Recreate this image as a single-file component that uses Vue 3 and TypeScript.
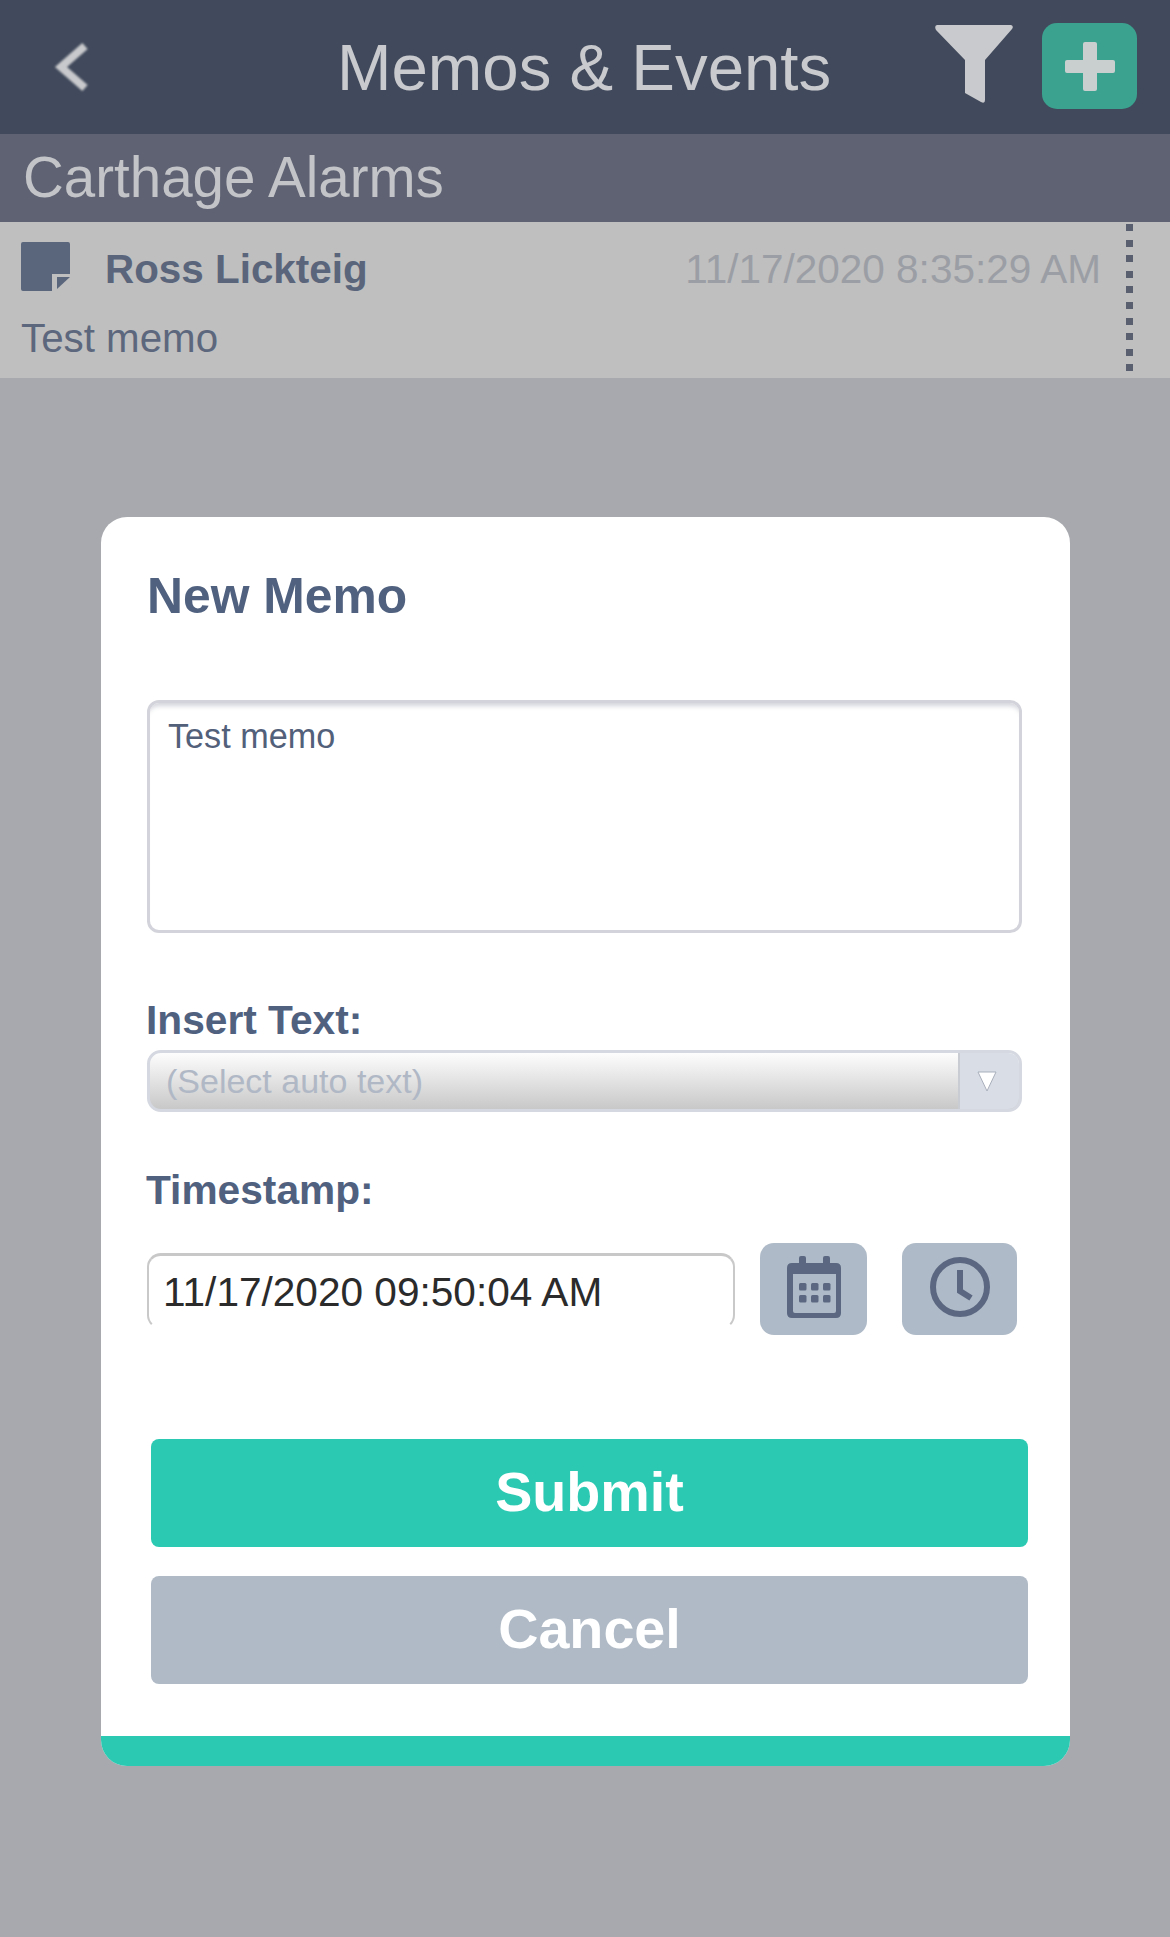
<script setup lang="ts">
import { ref } from 'vue';

const memoText = ref('Test memo');
const timestamp = ref('11/17/2020 09:50:04 AM');

const calendarDots = [12, 24, 36].flatMap((x) => [27, 39].map((y) => ({ x, y })));
</script>

<template>
  <div class="screen">
    <header class="topbar">
      <svg class="back" width="34" height="48" viewBox="0 0 34 48">
        <path d="M31 3 L7 24 L31 45" fill="none" stroke="#c8c9cc" stroke-width="8" />
      </svg>
      <h1 class="title">Memos &amp; Events</h1>
      <svg class="filter" width="78" height="78" viewBox="0 0 78 78">
        <path d="M2 0 H76 Q79 1 77 4 L50 35 V75 Q50 79 46 77 L30 68 V35 L1 5 Q-1 1 2 0 Z" fill="#c9cacd" />
      </svg>
      <button class="add" type="button">
        <svg width="50" height="49" viewBox="0 0 50 49">
          <path d="M18 2 Q18 0 20 0 H30 Q32 0 32 2 V18 H48 Q50 18 50 20 V29 Q50 31 48 31 H32 V47 Q32 49 30 49 H20 Q18 49 18 47 V31 H2 Q0 31 0 29 V20 Q0 18 2 18 H18 Z" fill="#c9cfce" />
        </svg>
      </button>
    </header>

    <div class="subbar">Carthage Alarms</div>

    <section class="memo-row">
      <div class="memo-body">
        <div class="memo-head">
          <svg class="note" width="49" height="49" viewBox="0 0 49 49">
            <path d="M2 0 H47 Q49 0 49 2 V32 H31 V49 H2 Q0 49 0 47 V2 Q0 0 2 0 Z" fill="#5a667c" />
            <path d="M36 35 H49 L36 47 Z" fill="#5a667c" />
          </svg>
          <span class="author">Ross Lickteig</span>
          <span class="stamp">11/17/2020 8:35:29 AM</span>
        </div>
        <p class="memo-text">Test memo</p>
      </div>
      <div class="dots"></div>
    </section>

    <form class="modal" @submit.prevent>
      <h2 class="modal-title">New Memo</h2>
      <textarea v-model="memoText" class="memo-input"></textarea>

      <label class="field-label insert-label">Insert Text:</label>
      <div class="select">
        <span class="select-text">(Select auto text)</span>
        <span class="select-arrow">
          <svg width="20" height="21" viewBox="0 0 20 21">
            <path d="M1 1 H19 L10 20 Z" fill="#fff" stroke="#a9afbb" stroke-width="1" />
          </svg>
        </span>
      </div>

      <label class="field-label stamp-label">Timestamp:</label>
      <div class="stamp-row">
        <input v-model="timestamp" class="stamp-input" type="text" />
        <button class="icon-btn cal-btn" type="button">
          <svg width="54" height="62" viewBox="0 0 54 62">
            <rect x="12" y="0" width="7" height="12" rx="2" fill="#5b6780" />
            <rect x="36" y="0" width="7" height="12" rx="2" fill="#5b6780" />
            <path fill-rule="evenodd" d="M5 7 H49 Q54 7 54 12 V57 Q54 62 49 62 H5 Q0 62 0 57 V12 Q0 7 5 7 Z M6 18 V55 Q6 57 8 57 H47 Q49 57 49 55 V18 Z" fill="#5b6780" />
            <rect v-for="d in calendarDots" :key="`${d.x}-${d.y}`" :x="d.x" :y="d.y" width="7.5" height="7.5" rx="1.5" fill="#5b6780" />
          </svg>
        </button>
        <button class="icon-btn clock-btn" type="button">
          <svg width="60" height="60" viewBox="0 0 60 60">
            <circle cx="30" cy="30" r="27" fill="none" stroke="#5b6780" stroke-width="6" />
            <path d="M30 13 V34 L41 41" fill="none" stroke="#5b6780" stroke-width="6" />
          </svg>
        </button>
      </div>

      <button class="action submit" type="submit">Submit</button>
      <button class="action cancel" type="button">Cancel</button>
      <div class="modal-band"></div>
    </form>
  </div>
</template>

<style>
html,
body {
  margin: 0;
  background: #a7a9ae;
}
</style>

<style scoped>
.screen {
  width: 1170px;
  height: 1937px;
  overflow: hidden;
  background: #a7a9ae;
  font-family: "Liberation Sans", Arial, sans-serif;
}

/* top bar */
.topbar {
  height: 134px;
  display: flex;
  align-items: center;
  background: #414a5c;
  padding: 0 33px 0 54px;
  box-sizing: border-box;
}

.back {
  filter: blur(0.8px);
  flex: none;
}

.title {
  margin: 2px 0 0 249px;
  font-size: 65.4px;
  font-weight: 400;
  line-height: 132px;
  color: #c9cacd;
  white-space: nowrap;
}

.filter {
  margin-left: auto;
  margin-bottom: 6px;
  flex: none;
}

.add {
  flex: none;
  width: 95px;
  height: 86px;
  margin: 0 0 2px 29px;
  padding: 0;
  border: none;
  border-radius: 15px;
  background: #3aa28f;
  display: flex;
  align-items: center;
  justify-content: center;
}

.subbar {
  height: 88px;
  padding-left: 23px;
  background: #5e6272;
  color: #c3c4c8;
  font-size: 56.5px;
  line-height: 88px;
}

/* memo list row */
.memo-row {
  height: 156px;
  display: flex;
  background: #bfbfbf;
}

.memo-body {
  flex: 1;
  padding: 20px 0 0 21px;
}

.memo-head {
  display: flex;
  align-items: center;
  height: 49px;
}

.note {
  flex: none;
}

.author {
  margin-left: 35px;
  padding-top: 5px;
  font-size: 40.4px;
  font-weight: 700;
  color: #5a657b;
}

.stamp {
  margin-left: auto;
  margin-right: 25px;
  padding-top: 5px;
  font-size: 40.5px;
  color: #9b9ea5;
}

.memo-text {
  margin: 28px 0 0;
  font-size: 40.3px;
  line-height: 40px;
  color: #5c677d;
}

.dots {
  width: 7px;
  height: 149px;
  margin: 2px 37px 0 0;
  background: repeating-linear-gradient(to bottom, #5a5f70 0 7px, transparent 7px 15.6px);
}

/* dialog */
.modal {
  width: 969px;
  height: 1249px;
  margin: 139px 0 0 101px;
  padding: 51px 0 0 46px;
  box-sizing: border-box;
  position: relative;
  overflow: hidden;
  border-radius: 26px;
  background: #fff;
  display: flex;
  flex-direction: column;
  align-items: flex-start;
}

.modal-title {
  margin: 0;
  font-size: 49.8px;
  font-weight: 700;
  line-height: 56px;
  color: #50617f;
}

.memo-input {
  display: block;
  width: 875px;
  height: 233px;
  margin-top: 76px;
  padding: 14px 18px;
  box-sizing: border-box;
  border: 3px solid #d3d4db;
  border-radius: 12px;
  box-shadow: inset 0 7px 5px -4px #d3d4db;
  outline: none;
  resize: none;
  font-family: inherit;
  font-size: 34.2px;
  line-height: 38px;
  color: #52607a;
}

.field-label {
  font-size: 40.7px;
  font-weight: 700;
  line-height: 44px;
  margin-left: -1px;
  color: #50617f;
}

.insert-label {
  margin-top: 65px;
}

.stamp-label {
  margin-top: 56px;
}

.select {
  width: 875px;
  height: 62px;
  margin-top: 8px;
  box-sizing: border-box;
  border: 3px solid #d5d8e0;
  border-radius: 14px;
  overflow: hidden;
  display: flex;
  background: linear-gradient(to bottom, #fdfdfd, #c8c8c8);
}

.select-text {
  flex: 1;
  padding-left: 16px;
  font-size: 34px;
  line-height: 56px;
  color: #b0b8c6;
}

.select-arrow {
  width: 61px;
  padding-right: 6px;
  display: flex;
  align-items: center;
  justify-content: center;
  box-sizing: border-box;
  border-left: 2px solid #c9ccd3;
  background: #d8dde6;
}

.stamp-row {
  display: flex;
  align-items: flex-start;
  margin-top: 31px;
}

.stamp-input {
  width: 588px;
  height: 76px;
  margin-top: 10px;
  padding: 1px 0 0 14px;
  box-sizing: border-box;
  border: 2px solid #c9c9c9;
  border-top: 3px solid #c8c8c8;
  border-bottom-color: #fff;
  border-radius: 14px;
  outline: none;
  font-family: inherit;
  font-size: 40.6px;
  color: #2b2b2b;
  background: #fff;
}

.icon-btn {
  height: 92px;
  padding: 0 0 4px;
  border: none;
  border-radius: 14px;
  background: #aebac7;
  display: flex;
  align-items: center;
  justify-content: center;
}

.cal-btn {
  width: 107px;
  margin-left: 25px;
}

.clock-btn {
  width: 115px;
  margin-left: 35px;
}

.action {
  display: block;
  width: 877px;
  height: 108px;
  margin-left: 4px;
  padding: 0 0 2px;
  border: none;
  border-radius: 8px;
  font-family: inherit;
  font-size: 55.7px;
  font-weight: 700;
  color: #fff;
}

.submit {
  margin-top: 104px;
  background: #2cc9b2;
}

.cancel {
  margin-top: 29px;
  background: #afbac6;
}

/* strip along the dialog's bottom edge */
.modal-band {
  position: absolute;
  left: 0;
  right: 0;
  bottom: 0;
  height: 30px;
  background: #2cc9b2;
}
</style>
